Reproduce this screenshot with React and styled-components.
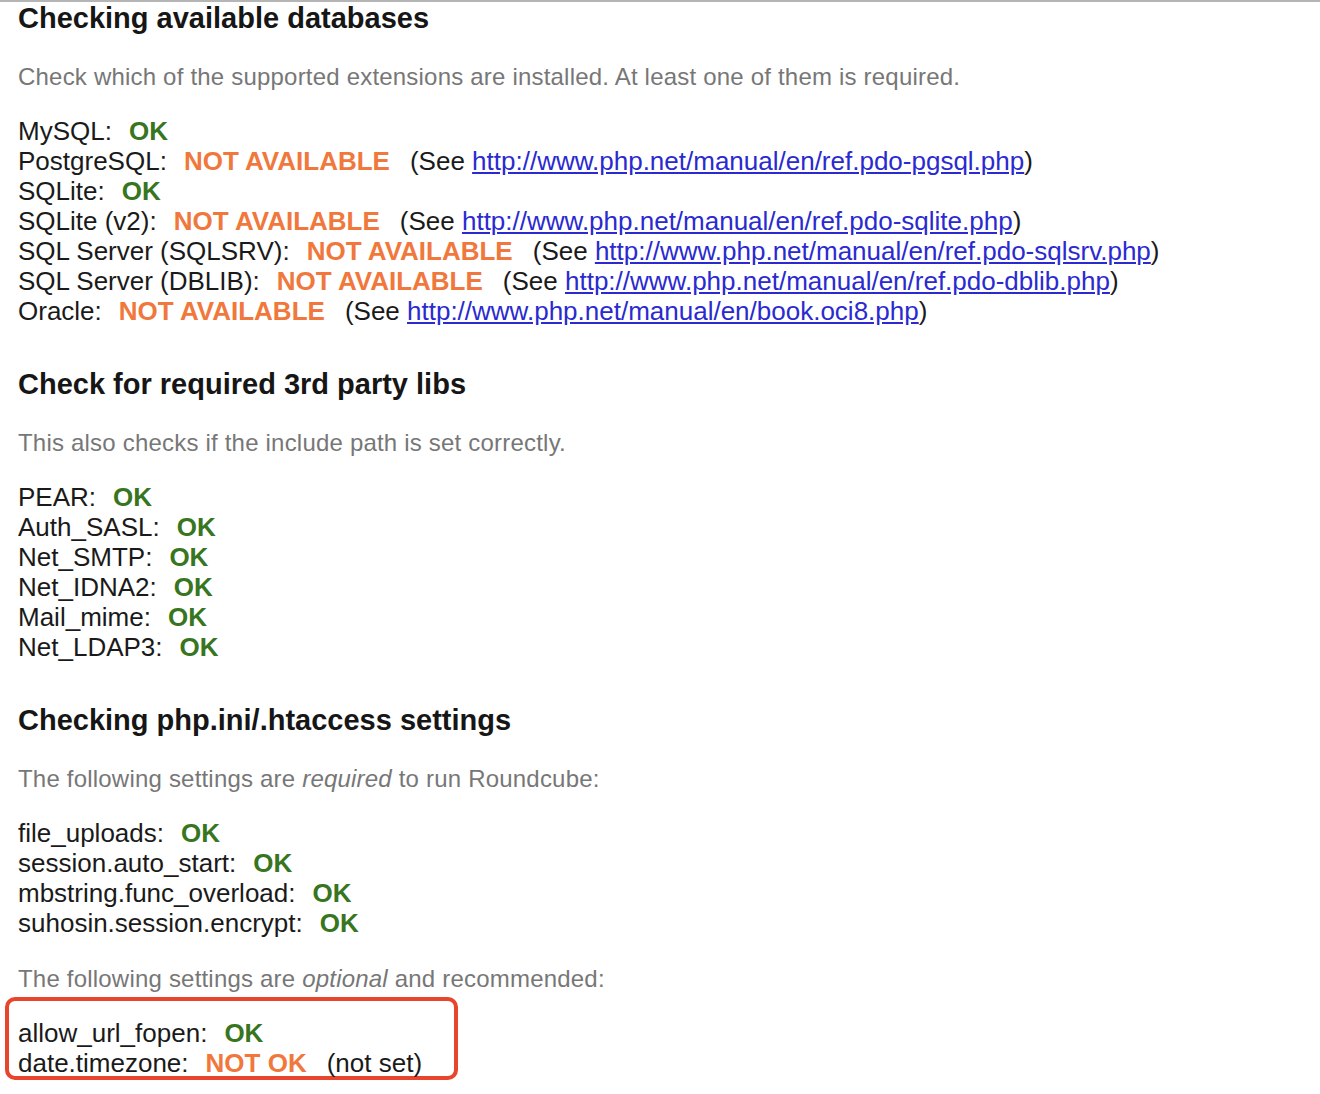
import React from 'react';
import styled, { createGlobalStyle } from 'styled-components';

const GlobalStyle = createGlobalStyle`
  html, body {
    margin: 0;
    padding: 0;
    background: #ffffff;
  }
  body {
    font-family: "Liberation Sans", Arial, sans-serif;
    color: #1a1a1a;
  }
`;

const Page = styled.div`
  border-top: 2px solid #b5b5b5;
  padding: 0 18px 20px 18px;
`;

const Heading = styled.h3`
  margin: ${props => props.$first ? '0' : '42px'} 0 0 0;
  font-size: 29px;
  line-height: 32px;
  font-weight: bold;
  color: #161616;
`;

const Hint = styled.p`
  margin: ${props => props.$gap || 28}px 0 0 0;
  font-size: 24px;
  line-height: 30px;
  color: #777777;
  letter-spacing: 0.2px;

  em {
    font-style: italic;
  }
`;

const CheckList = styled.div`
  margin-top: 24px;
  font-size: 26px;
  line-height: 30px;
`;

const CheckRow = styled.div`
  white-space: nowrap;
`;

const Status = styled.span`
  margin-left: 17px;
  font-weight: bold;
  color: ${props => props.$ok ? '#377520' : '#f0783c'};
`;

const Note = styled.span`
  margin-left: 20px;
`;

const Link = styled.a`
  color: #2a2ad0;
  text-decoration: underline;
`;

const Highlight = styled.div`
  box-sizing: border-box;
  margin: 3px 0 0 -13px;
  width: 453px;
  height: 83px;
  padding: 17px 0 0 9px;
  border: 4px solid #e8452d;
  border-radius: 10px;
`;

const HighlightList = styled(CheckList)`
  margin-top: 0;
`;

const databases = [
  { name: 'MySQL', ok: true },
  { name: 'PostgreSQL', ok: false, url: 'http://www.php.net/manual/en/ref.pdo-pgsql.php' },
  { name: 'SQLite', ok: true },
  { name: 'SQLite (v2)', ok: false, url: 'http://www.php.net/manual/en/ref.pdo-sqlite.php' },
  { name: 'SQL Server (SQLSRV)', ok: false, url: 'http://www.php.net/manual/en/ref.pdo-sqlsrv.php' },
  { name: 'SQL Server (DBLIB)', ok: false, url: 'http://www.php.net/manual/en/ref.pdo-dblib.php' },
  { name: 'Oracle', ok: false, url: 'http://www.php.net/manual/en/book.oci8.php' },
];

const libs = ['PEAR', 'Auth_SASL', 'Net_SMTP', 'Net_IDNA2', 'Mail_mime', 'Net_LDAP3'];

const required = ['file_uploads', 'session.auto_start', 'mbstring.func_overload', 'suhosin.session.encrypt'];

const Row = ({ name, ok, okText, failText, url, note }) => (
  <CheckRow>
    {name}:
    <Status $ok={ok}>{ok ? (okText || 'OK') : (failText || 'NOT AVAILABLE')}</Status>
    {url && (
      <Note>(See <Link href={url}>{url}</Link>)</Note>
    )}
    {note && <Note>{note}</Note>}
  </CheckRow>
);

const App = () => {
  return (
    <>
      <GlobalStyle />
      <Page>
        <Heading $first>Checking available databases</Heading>
        <Hint>Check which of the supported extensions are installed. At least one of them is required.</Hint>
        <CheckList>
          {databases.map(db => (
            <Row key={db.name} {...db} />
          ))}
        </CheckList>

        <Heading>Check for required 3rd party libs</Heading>
        <Hint>This also checks if the include path is set correctly.</Hint>
        <CheckList>
          {libs.map(lib => (
            <Row key={lib} name={lib} ok />
          ))}
        </CheckList>

        <Heading>Checking php.ini/.htaccess settings</Heading>
        <Hint>The following settings are <em>required</em> to run Roundcube:</Hint>
        <CheckList>
          {required.map(item => (
            <Row key={item} name={item} ok />
          ))}
        </CheckList>

        <Hint $gap={26}>The following settings are <em>optional</em> and recommended:</Hint>
        <Highlight>
          <HighlightList>
            <Row name="allow_url_fopen" ok />
            <Row name="date.timezone" ok={false} failText="NOT OK" note="(not set)" />
          </HighlightList>
        </Highlight>
      </Page>
    </>
  );
};

export default App;
